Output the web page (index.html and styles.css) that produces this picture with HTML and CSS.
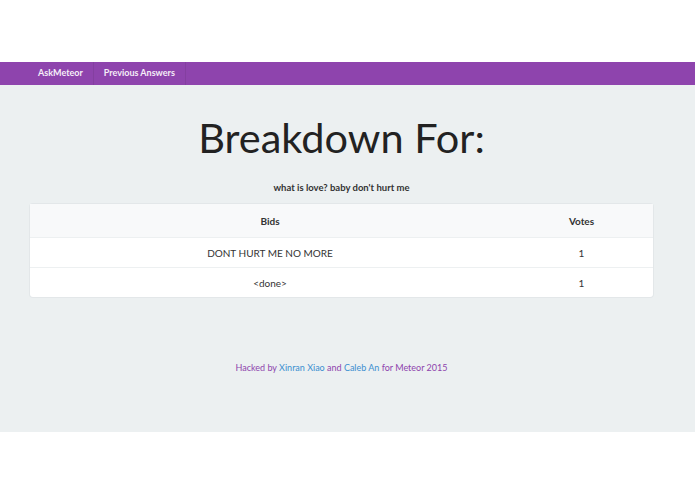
FILE: index.html
```html
<!DOCTYPE html>
<html lang="en">
<head>
  <meta charset="UTF-8">
  <title>AskMeteor - Breakdown</title>
  <link rel="stylesheet" href="styles.css">
</head>
<body>

  <div class="page">
    <nav class="navbar">
      <a class="nav-item" href="#">AskMeteor</a>
      <a class="nav-item" href="#">Previous Answers</a>
    </nav>

    <div class="content">
      <h1>Breakdown For:</h1>
      <p class="question">what is love? baby don't hurt me</p>

      <table class="results">
        <thead>
          <tr>
            <th class="col-bid">Bids</th>
            <th class="col-votes">Votes</th>
          </tr>
        </thead>
        <tbody>
          <tr>
            <td>DONT HURT ME NO MORE</td>
            <td>1</td>
          </tr>
          <tr>
            <td>&lt;done&gt;</td>
            <td>1</td>
          </tr>
        </tbody>
      </table>

      <p class="footer">
        Hacked by <a href="#">Xinran Xiao</a> and <a href="#">Caleb An</a> for Meteor 2015
      </p>
    </div>
  </div>

</body>
</html>
```

FILE: styles.css
```css
body {
  margin: 0;
  background: #fff;
  font-family: Lato, "Open Sans", sans-serif;
  color: #2c2c2c;
}

.page {
  margin-top: 62px;
  height: 370px;
  background: #ecf0f1;
}

.navbar {
  display: flex;
  height: 23px;
  padding-left: 28px;
  background: #8e44ad;
}

.nav-item {
  display: flex;
  align-items: center;
  padding: 0 10px 2px;
  border-right: 1px solid rgba(0, 0, 0, 0.07);
  color: #f5eef8;
  font-size: 9px;
  font-weight: bold;
  text-decoration: none;
}

.content {
  padding: 0 42px 0 30px;
  text-align: center;
}

h1 {
  margin: 0;
  padding-top: 26px;
  font-size: 41.5px;
  font-weight: normal;
  line-height: 52px;
  color: #222;
}

.question {
  margin: 19px 0 11px;
  font-size: 9.5px;
  font-weight: bold;
  color: #333;
}

.results {
  width: 100%;
  border-collapse: collapse;
  background: #fff;
  border-radius: 3px;
  box-shadow: 0 0 0 1px #e3e7e9;
  font-size: 10px;
}

.results th {
  height: 33px;
  padding: 0;
  background: #f8f9fa;
  font-weight: bold;
  color: #333;
}

.results td {
  height: 29px;
  padding: 0;
  border-top: 1px solid #edf0f1;
  color: #333;
}

.col-votes {
  width: 143px;
}

.footer {
  margin: 65px 0 0;
  font-size: 9px;
  color: #8e44ad;
}

.footer a {
  color: #3b8fd0;
  text-decoration: none;
}
```
